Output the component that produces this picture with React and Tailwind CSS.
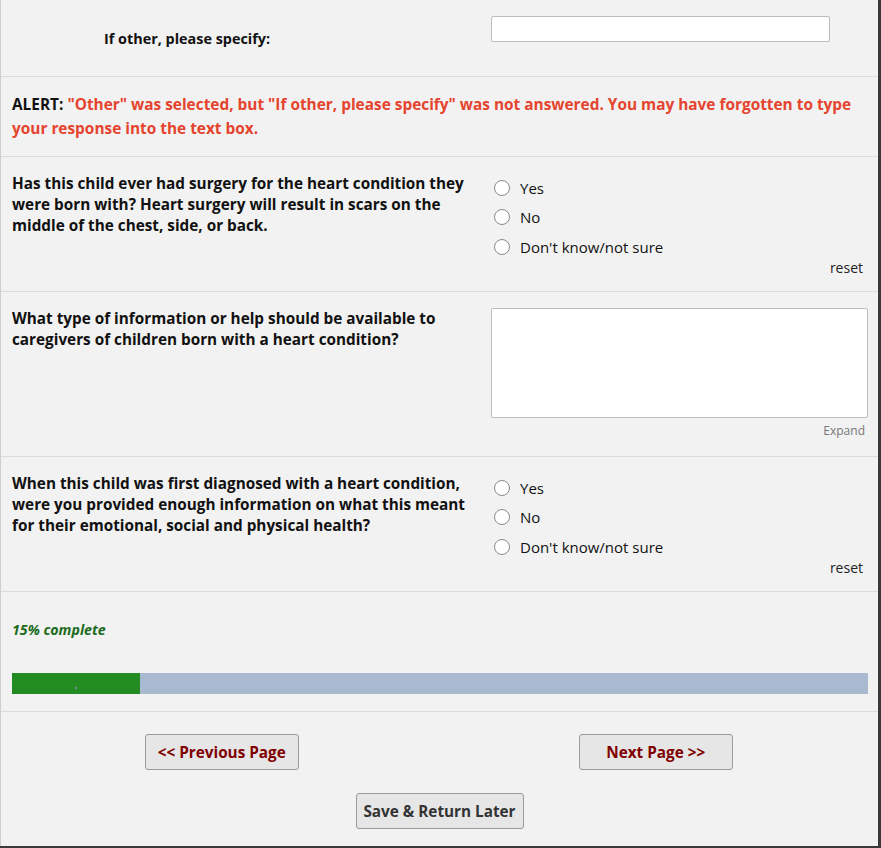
import React from "react";

const cond = "[font-family:'Open_Sans',sans-serif] [font-stretch:96%]";

function Radio({ label }) {
  return (
    <div className="flex items-center h-[29.5px]">
      <span className="w-[16px] h-[16px] rounded-full border border-[#8a8a8a] bg-white ml-[2px] shrink-0"></span>
      <span className="ml-[10px] text-[15px] text-[#111]">{label}</span>
    </div>
  );
}

function RadioRow({ question, h }) {
  return (
    <div className={"flex border-b border-[#dcdcdc] " + h}>
      <div className="w-[480px] pl-[11px] pt-[16px] pr-[6px] text-[15.3px] font-bold leading-[21px] text-[#111]">
        {question}
      </div>
      <div className="flex-1 pl-[11px] pt-[16px] pr-[15px] flex flex-col">
        <Radio label="Yes" />
        <Radio label="No" />
        <Radio label="Don't know/not sure" />
        <div className="text-right text-[14px] text-[#222] mt-[-5px]">reset</div>
      </div>
    </div>
  );
}

export default function App() {
  return (
    <div className="w-[881px] h-[848px] overflow-hidden bg-[#f2f2f2] [font-family:'Open_Sans',sans-serif]">
      <div className="w-[881px] h-[846px] border-l border-[#cfcfcf] border-r-[3px] border-r-[#3a3a3a] flex flex-col">
        {/* other specify */}
        <div className="flex h-[77px] border-b border-[#dcdcdc]">
          <div className="w-[490px] pl-[103px] pt-[26px]">
            <span className={"text-[14.4px] font-bold text-[#111] " + cond}>If other, please specify:</span>
          </div>
          <div className="pt-[16px]">
            <div className="w-[339px] h-[26px] bg-white border border-[#bdbdbd] rounded-[2px]"></div>
          </div>
        </div>

        {/* alert */}
        <div className="h-[80px] border-b border-[#dcdcdc] pl-[11px] pr-[20px] pt-[16px]">
          <p className={"text-[15.4px] font-bold leading-[24px] text-[#e5442f] " + cond}>
            <span className="text-[#111]">ALERT:</span> "Other" was selected, but "If other, please specify" was not answered. You may have forgotten to type your response into the text box.
          </p>
        </div>

        <RadioRow
          h="h-[135px]"
          question="Has this child ever had surgery for the heart condition they were born with? Heart surgery will result in scars on the middle of the chest, side, or back."
        />

        {/* textarea row */}
        <div className="flex h-[165px] border-b border-[#dcdcdc]">
          <div className="w-[480px] pl-[11px] pt-[16px] pr-[20px] text-[15.3px] font-bold leading-[21px] text-[#111]">
            What type of information or help should be available to caregivers of children born with a heart condition?
          </div>
          <div className="flex-1 pl-[10px] pt-[16px] pr-[10px]">
            <div className="w-[377px] h-[110px] bg-white border border-[#bdbdbd] rounded-[2px]"></div>
            <div className="text-right text-[12px] text-[#777] pr-[3px] mt-[4px]">Expand</div>
          </div>
        </div>

        <RadioRow
          h="h-[135px]"
          question="When this child was first diagnosed with a heart condition, were you provided enough information on what this meant for their emotional, social and physical health?"
        />

        {/* progress */}
        <div className="h-[120px] border-b border-[#dcdcdc] pl-[11px] pr-[10px] pt-[27px]">
          <div className={"text-[14.2px] font-bold italic text-[#1c6b1c] " + cond}>15% complete</div>
          <div className="mt-[33px] h-[21px] bg-[#a9b9d0] flex">
            <div className="w-[15%] h-full bg-[#228b22] flex items-end justify-center pb-[5px]">
              <span className="w-[2px] h-[2px] bg-[#7a8aa0]"></span>
            </div>
          </div>
        </div>

        {/* buttons */}
        <div className="flex-1 flex flex-col items-center pt-[22px]">
          <div className="w-full flex">
            <div className="w-[440px] flex justify-center pl-[2px]">
              <button className={"w-[154px] h-[36px] bg-[#e6e6e6] border border-[#9a9a9a] rounded-[3px] text-[15.3px] font-bold text-[#800000] " + cond}>
                &lt;&lt; Previous Page
              </button>
            </div>
            <div className="w-[438px] flex justify-center pr-[7px]">
              <button className={"w-[154px] h-[36px] bg-[#e6e6e6] border border-[#9a9a9a] rounded-[3px] text-[15.3px] font-bold text-[#800000] " + cond}>
                Next Page &gt;&gt;
              </button>
            </div>
          </div>
          <button className={"mt-[23px] w-[168px] h-[36px] bg-[#e6e6e6] border border-[#9a9a9a] rounded-[3px] text-[15.3px] font-bold text-[#333] " + cond}>
            Save &amp; Return Later
          </button>
        </div>
      </div>
      <div className="h-[2px] bg-[#3a3a3a]"></div>
    </div>
  );
}
